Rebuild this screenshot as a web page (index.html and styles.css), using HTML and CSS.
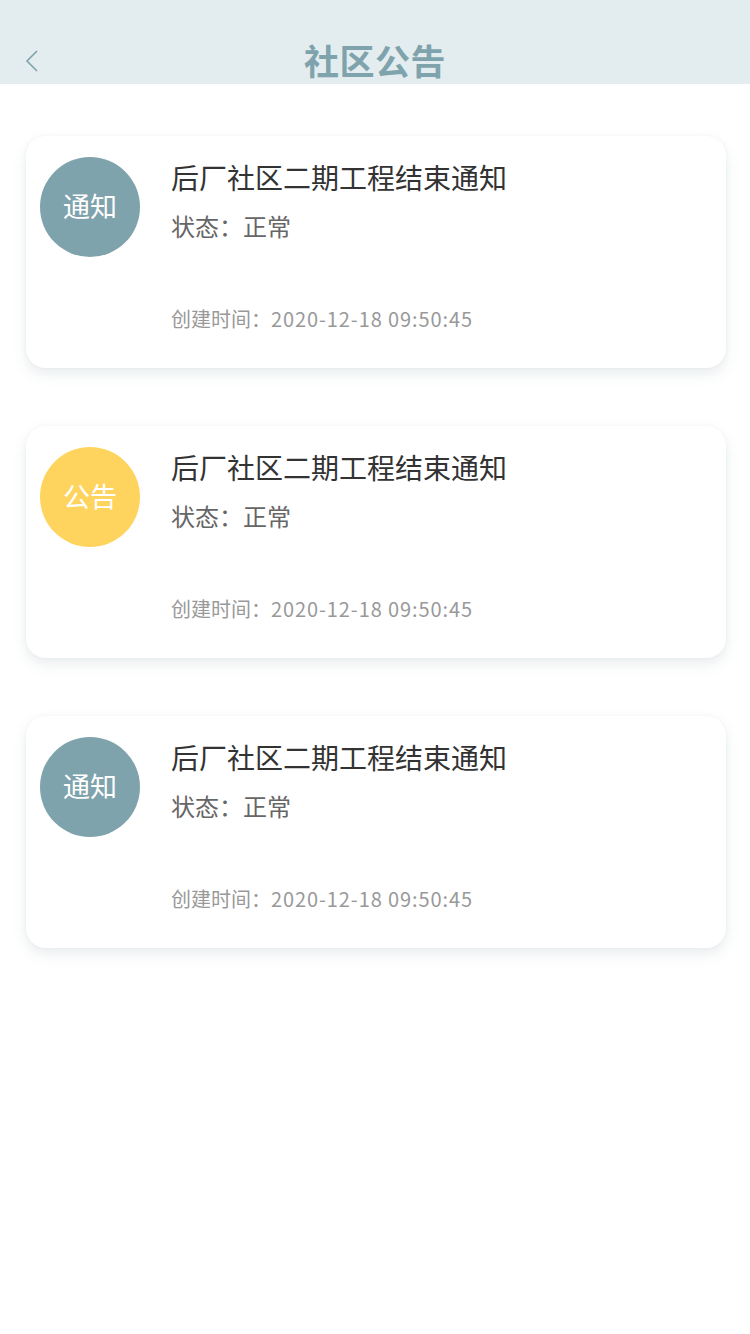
FILE: index.html
```html
<!DOCTYPE html>
<html lang="zh">
<head>
<meta charset="utf-8">
<link rel="stylesheet" href="styles.css">
</head>
<body>
<header class="nav">
  <span class="back">
    <svg width="14" height="22" viewBox="0 0 14 22"><path d="M12 1 L2 11 L12 21" fill="none" stroke="#7fa3ac" stroke-width="1.6"/></svg>
  </span>
  <h1 class="nav-title">社区公告</h1>
</header>
<main class="list">
  <div class="card">
    <div class="badge badge-blue">通知</div>
    <div class="info">
      <div class="title">后厂社区二期工程结束通知</div>
      <div class="status">状态：正常</div>
      <div class="time">创建时间：<span class="num">2020-12-18 09:50:45</span></div>
    </div>
  </div>
  <div class="card">
    <div class="badge badge-yellow">公告</div>
    <div class="info">
      <div class="title">后厂社区二期工程结束通知</div>
      <div class="status">状态：正常</div>
      <div class="time">创建时间：<span class="num">2020-12-18 09:50:45</span></div>
    </div>
  </div>
  <div class="card">
    <div class="badge badge-blue">通知</div>
    <div class="info">
      <div class="title">后厂社区二期工程结束通知</div>
      <div class="status">状态：正常</div>
      <div class="time">创建时间：<span class="num">2020-12-18 09:50:45</span></div>
    </div>
  </div>
</main>
</body>
</html>
```
FILE: styles.css
```css
* { box-sizing: border-box; }
html, body { margin: 0; padding: 0; background: #fff; }
body {
  width: 750px;
  min-height: 1334px;
  font-family: "Noto Sans CJK SC", "Noto Sans", sans-serif;
}
.nav {
  position: relative;
  height: 84px;
  background: #e3ecee;
  display: flex;
  align-items: flex-end;
  justify-content: center;
}
.back {
  position: absolute;
  left: 25px;
  top: 50px;
  width: 14px;
  height: 22px;
  display: flex;
}
.nav-title {
  margin: 0;
  font-size: 35px;
  font-weight: 700;
  color: #7fa3ac;
  line-height: 44px;
  padding-bottom: 2px;
  letter-spacing: 0.5px;
}
.list {
  padding: 52px 24px 0 26px;
  display: flex;
  flex-direction: column;
  gap: 58px;
}
.card {
  width: 700px;
  height: 232px;
  background: #fff;
  border-radius: 20px;
  box-shadow: 0 6px 14px rgba(120, 140, 150, 0.16), 0 0 4px rgba(120, 140, 150, 0.06);
  display: flex;
  align-items: flex-start;
  padding: 21px 0 0 14px;
}
.badge {
  width: 100px;
  height: 100px;
  border-radius: 50%;
  flex: none;
  display: flex;
  align-items: center;
  justify-content: center;
  color: #fff;
  font-size: 27px;
  font-weight: 400;
  padding-bottom: 4px;
}
.badge-blue { background: #7fa3ac; }
.badge-yellow { background: #ffd45e; }
.info {
  margin-left: 31px;
  display: flex;
  flex-direction: column;
}
.title {
  margin-top: 2px;
  font-size: 28px;
  line-height: 36px;
  color: #333;
}
.status {
  margin-top: 16px;
  font-size: 24px;
  line-height: 30px;
  color: #666;
}
.time {
  margin-top: 65px;
  font-size: 20px;
  line-height: 26px;
  color: #999;
}
.num {
  letter-spacing: 0.9px;
}
```
